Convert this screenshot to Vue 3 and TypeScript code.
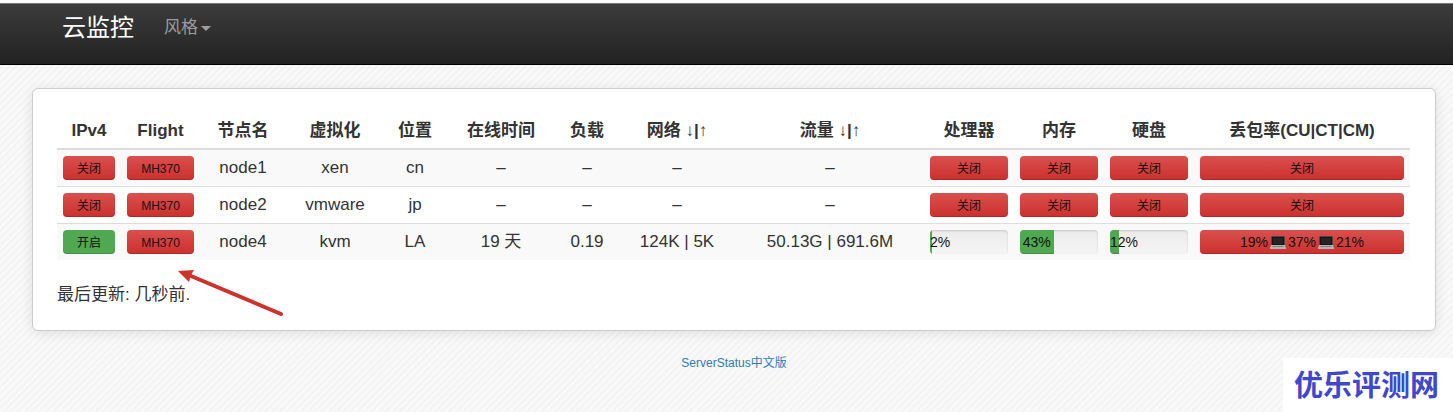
<script setup lang="ts">
interface Usage {
  label: string
  value: number
}

interface Node {
  name: string
  type: string
  location: string
  online: boolean
  uptime: string
  load: string
  network: string
  traffic: string
  usage: Usage[]
  loss: string[]
}

const columns: { key: string; title: string }[] = [
  { key: 'ip', title: 'IPv4' },
  { key: 'flight', title: 'Flight' },
  { key: 'name', title: '节点名' },
  { key: 'type', title: '虚拟化' },
  { key: 'location', title: '位置' },
  { key: 'uptime', title: '在线时间' },
  { key: 'load', title: '负载' },
  { key: 'network', title: '网络 ↓|↑' },
  { key: 'traffic', title: '流量 ↓|↑' },
  { key: 'cpu', title: '处理器' },
  { key: 'memory', title: '内存' },
  { key: 'disk', title: '硬盘' },
  { key: 'loss', title: '丢包率(CU|CT|CM)' },
]

function offline(name: string, type: string, location: string): Node {
  return {
    name, type, location, online: false,
    uptime: '–', load: '–', network: '–', traffic: '–',
    usage: [
      { label: '处理器', value: 0 },
      { label: '内存', value: 0 },
      { label: '硬盘', value: 0 },
    ],
    loss: [],
  }
}

const nodes: Node[] = [
  offline('node1', 'xen', 'cn'),
  offline('node2', 'vmware', 'jp'),
  {
    name: 'node4', type: 'kvm', location: 'LA', online: true,
    uptime: '19 天', load: '0.19', network: '124K | 5K', traffic: '50.13G | 691.6M',
    usage: [
      { label: '处理器', value: 2 },
      { label: '内存', value: 43 },
      { label: '硬盘', value: 12 },
    ],
    loss: ['19%', '37%', '21%'],
  },
]
</script>

<template>
  <div class="page">
    <header class="navbar">
      <a class="brand" href="#">云监控</a>
      <nav>
        <a class="menu" href="#">风格<span class="caret"></span></a>
      </nav>
    </header>

    <main class="card">
      <table>
        <colgroup>
          <col v-for="c in columns" :key="c.key" :class="'col-' + c.key" />
        </colgroup>
        <thead>
          <tr>
            <th v-for="c in columns" :key="c.key" scope="col">{{ c.title }}</th>
          </tr>
        </thead>
        <tbody>
          <tr v-for="n in nodes" :key="n.name">
            <td>
              <div class="bar" :class="n.online ? 'green' : 'red'">{{ n.online ? '开启' : '关闭' }}</div>
            </td>
            <td><div class="bar red">MH370</div></td>
            <td>{{ n.name }}</td>
            <td>{{ n.type }}</td>
            <td>{{ n.location }}</td>
            <td>{{ n.uptime }}</td>
            <td>{{ n.load }}</td>
            <td>{{ n.network }}</td>
            <td>{{ n.traffic }}</td>
            <td v-for="u in n.usage" :key="u.label">
              <div v-if="n.online" class="track">
                <div class="fill" :style="{ width: u.value + '%' }"><span>{{ u.value }}%</span></div>
              </div>
              <div v-else class="bar red">关闭</div>
            </td>
            <td>
              <div v-if="n.online" class="bar red loss">
                <template v-for="(l, i) in n.loss" :key="i">
                  <svg v-if="i > 0" class="laptop" viewBox="0 0 16 13" aria-hidden="true">
                    <path d="M2 0H14L15 1V9H1V1Z" fill="#4a4748" />
                    <path d="M2 1H14V9H2Z" fill="#141414" />
                    <path d="M3 2H13V8H3Z" fill="#262324" />
                    <path d="M1 9H15L16 12V13H0V12Z" fill="#b4b4b4" />
                    <path d="M3 10H13L14 11H2Z" fill="#808080" />
                  </svg>
                  <span>{{ l }}</span>
                </template>
              </div>
              <div v-else class="bar red">关闭</div>
            </td>
          </tr>
        </tbody>
      </table>
      <p class="updated">最后更新: 几秒前.</p>
      <svg class="pointer" viewBox="0 0 108 48" aria-hidden="true">
        <path d="M14 7L104 45" stroke="#cd322d" stroke-width="4" stroke-linecap="round" />
        <path d="M1 2L17 1L14 6L12 13Z" fill="#cd322d" />
      </svg>
    </main>

    <footer><a href="#">ServerStatus中文版</a></footer>
    <div class="watermark">优乐评测网</div>
  </div>
</template>

<style>
body {
  margin: 0;
  background: repeating-linear-gradient(135deg, #f9f9f9 0, #f9f9f9 2px, #f3f3f3 3px, #f3f3f3 4px, #f9f9f9 5px);
}
</style>

<style scoped>
.page {
  color: #333;
  font: 17px/24px "Liberation Sans", "Noto Sans CJK SC", sans-serif;
}

a {
  text-decoration: none;
}

.navbar {
  display: flex;
  box-sizing: border-box;
  height: 65px;
  padding: 13px 62px 0;
  gap: 30px;
  border-top: 3px solid #fafafa;
  border-bottom: 1px solid #000;
  background: linear-gradient(#3c3c3c, #222) padding-box;
  box-shadow: inset 0 1px 0 #777;
}

.brand {
  color: #fff;
  font-size: 24px;
}

.menu {
  display: flex;
  align-items: center;
  gap: 3px;
  color: #9d9d9d;
}

.caret {
  border: 5px solid transparent;
  border-top-color: currentColor;
  border-bottom: 0;
}

.card {
  position: relative;
  margin: 23px 17px 0 32px;
  padding: 23px 25px 24px 24px;
  border: 1px solid #ccc;
  border-radius: 6px;
  background: #fff;
  box-shadow: 0 2px 12px rgba(0, 0, 0, 0.1);
}

table {
  width: 100%;
  table-layout: fixed;
  border-collapse: separate;
  border-spacing: 0;
  text-align: center;
}

th,
td {
  padding: 6px;
  white-space: nowrap;
}

thead th {
  padding: 7px 6px 5px;
  border-bottom: 2px solid #ddd;
}

tbody tr + tr td {
  border-top: 1px solid #ddd;
}

tbody tr:nth-child(odd) td {
  background: #f9f9f9;
}

.col-ip { width: 64px; }
.col-flight { width: 79px; }
.col-name { width: 86px; }
.col-type { width: 98px; }
.col-location { width: 62px; }
.col-uptime { width: 110px; }
.col-load { width: 62px; }
.col-network { width: 118px; }
.col-traffic { width: 188px; }
.col-cpu,
.col-memory,
.col-disk { width: 90px; }
.col-loss { width: 216px; }

.bar {
  height: 24px;
  border-radius: 4px;
  color: #111;
  font-size: 12px;
  line-height: 26px;
  box-shadow: inset 0 -1px 0 rgba(0, 0, 0, 0.15);
}

.red {
  background: linear-gradient(#da504d, #cb302d);
}

.green {
  background: #50a850;
}

.track {
  height: 24px;
  overflow: hidden;
  border-radius: 4px;
  background: linear-gradient(#ebebeb, #f5f5f5);
  box-shadow: inset 0 1px 2px rgba(0, 0, 0, 0.15);
}

.fill {
  display: flex;
  justify-content: center;
  height: 24px;
  background: #50a850;
  box-shadow: inset 0 -1px 0 rgba(0, 0, 0, 0.15);
  color: #111;
  font-size: 14px;
  line-height: 24px;
}

.fill span {
  min-width: 100%;
}

.loss {
  display: flex;
  align-items: center;
  justify-content: center;
  gap: 2px;
  font-size: 14px;
}

.laptop {
  width: 16px;
  height: 13px;
}

.updated {
  margin: 23px 0 0;
}

.pointer {
  position: absolute;
  top: 180px;
  left: 144px;
  width: 108px;
  height: 48px;
  fill: none;
}

.card {
  padding-bottom: 23px;
}

footer {
  margin: 20px 17px 0 32px;
  font-size: 12px;
  text-align: center;
}

footer a {
  color: #337ab7;
}

.watermark {
  position: fixed;
  right: 0;
  bottom: 0;
  padding: 6px 14px 4px 11px;
  background: #fff;
  color: #3f48cc;
  font-size: 29px;
  font-weight: bold;
  line-height: 44px;
}
</style>
